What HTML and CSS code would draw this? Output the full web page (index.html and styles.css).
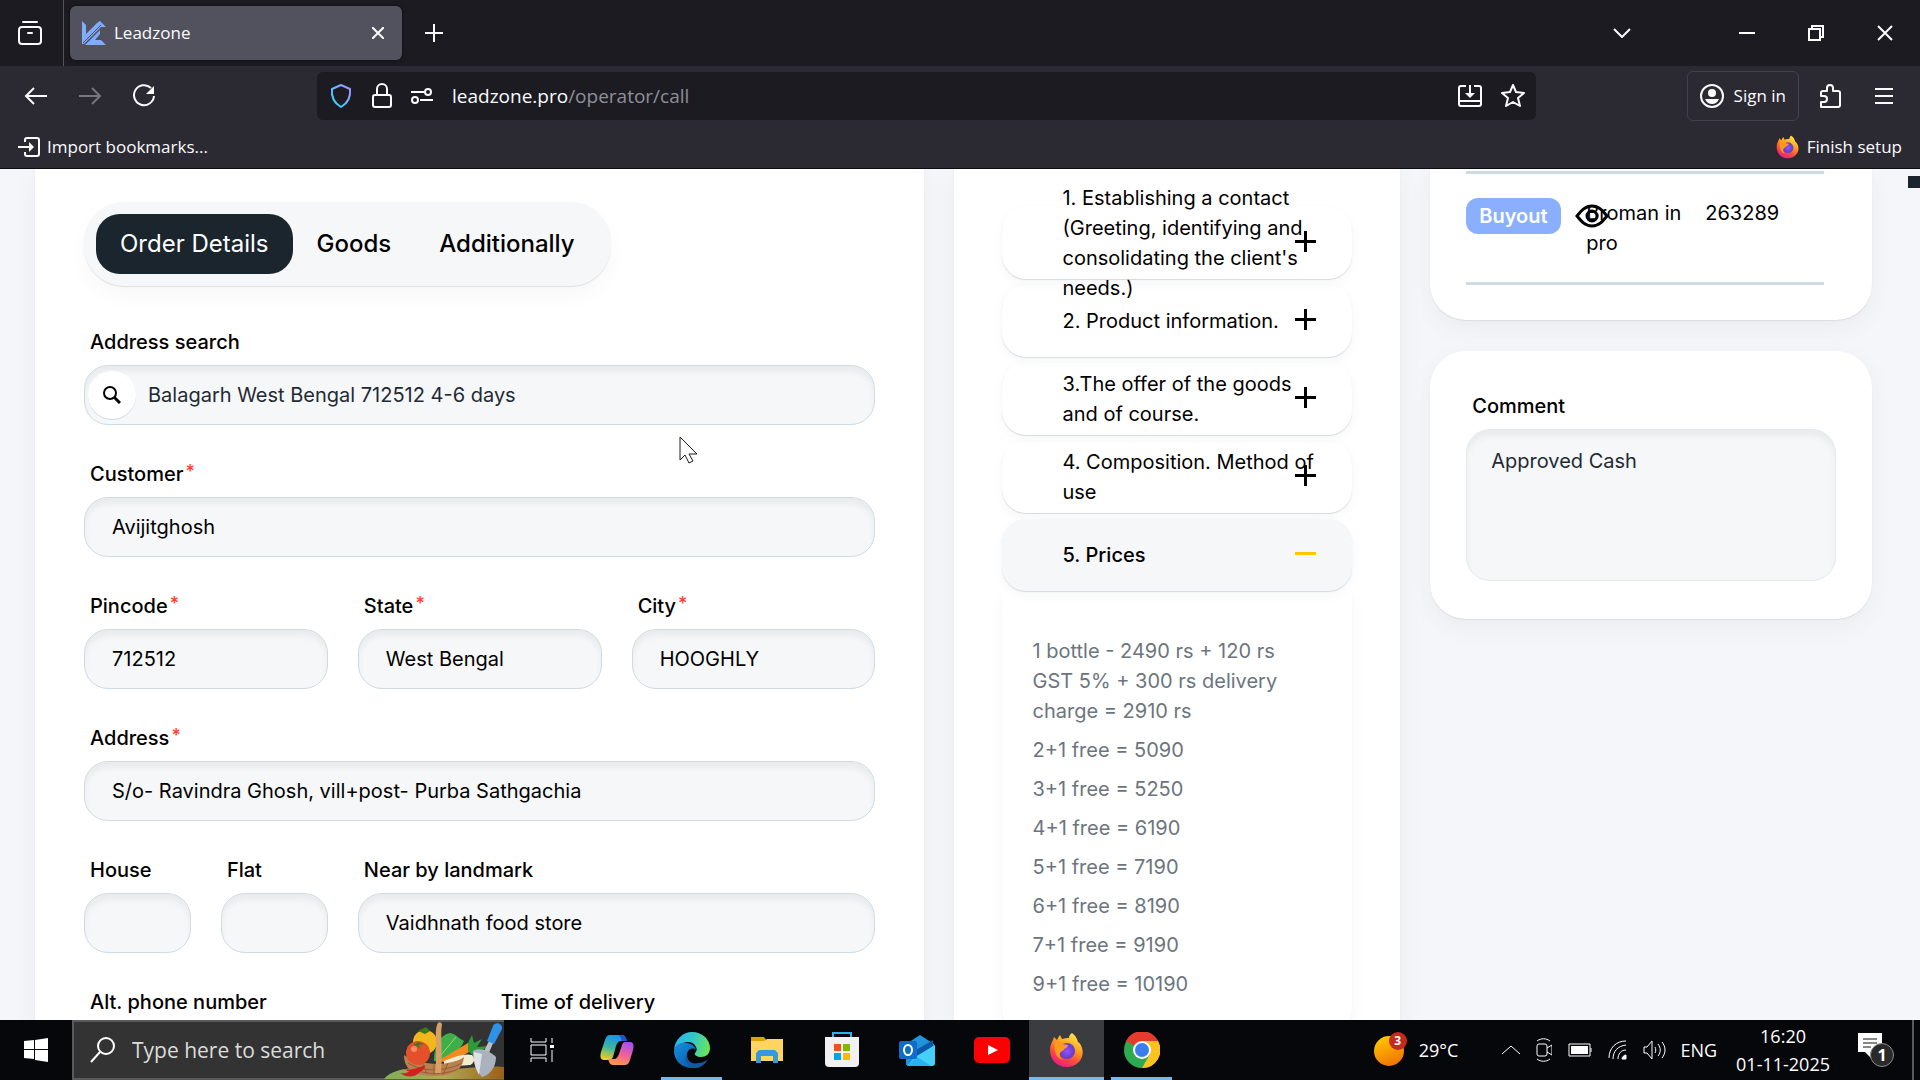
FILE: index.html
```
<!DOCTYPE html>
<html lang="en">
<head>
    <meta charset="UTF-8">
    <meta name="viewport" content="width=device-width, initial-scale=1.0">
    <title>Leadzone</title>
    <link rel="stylesheet" href="styles.css">
</head>
<body>
    <!-- gradients shared by the icons -->
    <svg width="0" height="0" class="defs" aria-hidden="true">
        <defs>
            <linearGradient id="shieldGrad" x1="0" y1="1" x2="1" y2="0"><stop offset="0" stop-color="#2ad4ff"/><stop offset=".5" stop-color="#6ab6ff"/><stop offset="1" stop-color="#a78bff"/></linearGradient>
            <linearGradient id="foxGrad" x1=".8" y1="0" x2=".3" y2="1"><stop offset="0" stop-color="#fff14f"/><stop offset=".4" stop-color="#ffa01e"/><stop offset=".7" stop-color="#ff4a3c"/><stop offset="1" stop-color="#e9178c"/></linearGradient>
            <radialGradient id="foxCore"><stop offset="0" stop-color="#9a4dff"/><stop offset="1" stop-color="#5b3fc4"/></radialGradient>
            <linearGradient id="edgeTop" x1="0" y1=".4" x2="1" y2=".6"><stop offset="0" stop-color="#2bb4ea"/><stop offset=".5" stop-color="#35c8c8"/><stop offset="1" stop-color="#6be84f"/></linearGradient>
            <linearGradient id="edgeLow" x1="0" y1="0" x2="1" y2="1"><stop offset="0" stop-color="#1590e0"/><stop offset="1" stop-color="#0a4f9e"/></linearGradient>
            <linearGradient id="copA" x1=".5" y1="0" x2=".2" y2="1"><stop offset="0" stop-color="#1793f0"/><stop offset=".5" stop-color="#3bb6a0"/><stop offset="1" stop-color="#f7d21a"/></linearGradient>
            <linearGradient id="copB" x1=".7" y1="0" x2=".3" y2="1"><stop offset="0" stop-color="#a850f0"/><stop offset=".5" stop-color="#f0609a"/><stop offset="1" stop-color="#ff9a4a"/></linearGradient>
            <linearGradient id="sunGrad" x1=".3" y1="0" x2=".7" y2="1"><stop offset="0" stop-color="#ffc800"/><stop offset="1" stop-color="#f07000"/></linearGradient>
            <linearGradient id="landGrad" x1="0" y1="0" x2="1" y2="0"><stop offset="0" stop-color="#7fae56"/><stop offset=".5" stop-color="#b0a850"/><stop offset="1" stop-color="#9a6018"/></linearGradient>
            <symbol id="firefox" viewBox="0 0 36 36">
                <path fill="url(#foxGrad)" d="M23 1c4 3 5 6 6 9 2 1 3 3 4 6 3 9-4 19-15 19S1 27 1 18c0-5 2-8 3-10l1-3 3 3c1-2 2-4 3-5l2 4c3-1 5-1 7-1 0-2 1-4 3-5z"/>
                <circle cx="18" cy="19" r="8" fill="url(#foxCore)"/>
                <path fill="#ff9a1e" d="M6 10c3-1 5 0 7 2l6 1c0 2-2 3-4 4 0 2-3 2-4 4-1 3 0 5 3 7-6-1-10-8-8-18z"/>
            </symbol>
        </defs>
    </svg>

    <header class="browser">
        <div class="titlebar">
            <button class="side-btn" aria-label="Recent browsing">
                <svg width="24" height="26" viewBox="0 0 24 26" fill="none" stroke="#fbfbfe" stroke-width="2" stroke-linecap="round"><path d="M5 2h14"/><rect x="1" y="7" width="22" height="17" rx="3"/><path d="M10 13h4"/></svg>
            </button>
            <div class="tab">
                <svg width="24" height="24" viewBox="0 0 24 24" fill="#7facff"><path d="M0 0l4 4v9L15 2l3-2 6 6h-5L2 23H0z"/><path d="M3 24L18 9v4l-5 6h6l5 5z"/><path d="M1 22L19 4" stroke="#52525e" stroke-width="1"/></svg>
                <span class="tab-title">Leadzone</span>
                <button aria-label="Close tab"><svg width="12" height="12" viewBox="0 0 12 12" stroke="#fbfbfe" stroke-width="2"><path d="M0 0l12 12M12 0L0 12"/></svg></button>
            </div>
            <button class="new-tab" aria-label="New tab"><svg width="18" height="18" viewBox="0 0 18 18" stroke="#fbfbfe" stroke-width="2"><path d="M9 0v18M0 9h18"/></svg></button>
            <div class="window-btns">
                <button class="list-tabs" aria-label="List all tabs"><svg width="18" height="10" viewBox="0 0 18 10" fill="none" stroke="#fbfbfe" stroke-width="2"><path d="M1 1l8 8 8-8"/></svg></button>
                <button aria-label="Minimize"><svg width="16" height="16" viewBox="0 0 16 16" stroke="#fff" stroke-width="2"><path d="M0 8h16"/></svg></button>
                <button aria-label="Restore"><svg width="16" height="16" viewBox="0 0 16 16" fill="none" stroke="#fff" stroke-width="2"><path d="M1 4h11v11H1zM4 4V1h11v11h-3"/></svg></button>
                <button aria-label="Close"><svg width="16" height="16" viewBox="0 0 16 16" stroke="#fff" stroke-width="2"><path d="M1 1l14 14M15 1L1 15"/></svg></button>
            </div>
        </div>

        <div class="toolbar">
            <div class="nav-btns">
                <button aria-label="Back"><svg width="24" height="20" viewBox="0 0 24 20" fill="none" stroke="#fbfbfe" stroke-width="2"><path d="M23 10H2M10 2l-8 8 8 8"/></svg></button>
                <button aria-label="Forward"><svg width="24" height="20" viewBox="0 0 24 20" fill="none" stroke="#75757e" stroke-width="2"><path d="M1 10h21M14 2l8 8-8 8"/></svg></button>
                <button aria-label="Reload"><svg width="24" height="24" viewBox="0 0 24 24" fill="none" stroke="#fbfbfe" stroke-width="2"><path d="M19 4a10 10 0 1 0 3 8"/><path d="M22 2v8h-8z" fill="#fbfbfe" stroke="none"/></svg></button>
            </div>
            <div class="urlbar">
                <svg width="24" height="26" viewBox="0 0 24 26" fill="none" stroke="url(#shieldGrad)" stroke-width="2"><path d="M12 2l9 4c1 9-2 14-9 18C5 20 2 15 3 6z" stroke-linejoin="round"/></svg>
                <svg width="20" height="26" viewBox="0 0 20 26" fill="none" stroke="#fbfbfe" stroke-width="2"><rect x="1" y="12" width="18" height="12" rx="2"/><path d="M5 12V6a5 5 0 0 1 10 0v6"/></svg>
                <svg width="22" height="16" viewBox="0 0 22 16" fill="none" stroke="#fbfbfe" stroke-width="2"><path d="M0 4h13M9 12h13"/><circle cx="17" cy="4" r="3"/><circle cx="4" cy="12" r="3"/></svg>
                <div class="url"><span>leadzone.pro</span>/operator/call</div>
                <svg width="24" height="24" viewBox="0 0 24 24" fill="none" stroke="#fbfbfe" stroke-width="2"><path d="M8 2H3a2 2 0 0 0-2 2v16a2 2 0 0 0 2 2h18a2 2 0 0 0 2-2V4a2 2 0 0 0-2-2h-5M1 17h22M12 1v11"/><path d="M7 9h10l-5 5z" fill="#fbfbfe" stroke="none"/></svg>
                <svg width="24" height="24" viewBox="0 0 24 24" fill="none" stroke="#fbfbfe" stroke-width="2" stroke-linejoin="round"><path d="M12 1l3 7 8 1-6 5 2 8-7-4-7 4 2-8-6-5 8-1z"/></svg>
            </div>
            <div class="account">
                <button class="sign-in">
                    <svg width="24" height="24" viewBox="0 0 24 24"><circle cx="12" cy="12" r="11" fill="none" stroke="#fbfbfe" stroke-width="2"/><circle cx="12" cy="9" r="4" fill="#fbfbfe"/><path d="M5 15h14c-1 3-4 5-7 5s-6-2-7-5z" fill="#fbfbfe"/></svg>
                    Sign in
                </button>
                <button aria-label="Extensions"><svg width="22" height="24" viewBox="0 0 22 24" fill="none" stroke="#fbfbfe" stroke-width="2" stroke-linejoin="round"><path d="M8 7V4a3 3 0 0 1 6 0v3h5a2 2 0 0 1 2 2v12a2 2 0 0 1-2 2H2v-5h3a3 3 0 0 0 0-6H2V9a2 2 0 0 1 2-2z"/></svg></button>
                <button aria-label="Menu"><svg width="18" height="16" viewBox="0 0 18 16" stroke="#fbfbfe" stroke-width="2"><path d="M0 1h18M0 8h18M0 15h18"/></svg></button>
            </div>
        </div>

        <div class="bookmarks">
            <a href="#">
                <svg width="22" height="20" viewBox="0 0 22 20" fill="none" stroke="#fbfbfe" stroke-width="2"><path d="M7 5V3a2 2 0 0 1 2-2h10a2 2 0 0 1 2 2v14a2 2 0 0 1-2 2H9a2 2 0 0 1-2-2v-2M0 10h14"/><path d="M11 5l5 5-5 5z" fill="#fbfbfe" stroke="none"/></svg>
                Import bookmarks...
            </a>
            <a href="#">
                <svg width="24" height="24"><use href="#firefox"/></svg>
                Finish setup
            </a>
        </div>
    </header>

    <main class="page">
        <section class="card order">
            <nav class="tabs">
                <button class="active">Order Details</button>
                <button>Goods</button>
                <button>Additionally</button>
            </nav>
            <form class="order-form">
                <div class="field full">
                    <label for="search">Address search</label>
                    <div class="search-box">
                        <input type="text" id="search" value="Balagarh West Bengal 712512 4-6 days">
                        <button type="button" aria-label="Search"><svg width="18" height="18" viewBox="0 0 18 18" fill="none" stroke="#000" stroke-width="2"><circle cx="7" cy="7" r="6"/><path d="M11 11l6 6" stroke-width="3"/></svg></button>
                    </div>
                </div>
                <div class="field full">
                    <label for="customer">Customer<sup>*</sup></label>
                    <input type="text" id="customer" value="Avijitghosh">
                </div>
                <div class="field third">
                    <label for="pincode">Pincode<sup>*</sup></label>
                    <input type="text" id="pincode" value="712512">
                </div>
                <div class="field third">
                    <label for="state">State<sup>*</sup></label>
                    <input type="text" id="state" value="West Bengal">
                </div>
                <div class="field third">
                    <label for="city">City<sup>*</sup></label>
                    <input type="text" id="city" value="HOOGHLY">
                </div>
                <div class="field full">
                    <label for="address">Address<sup>*</sup></label>
                    <input type="text" id="address" value="S/o- Ravindra Ghosh, vill+post- Purba Sathgachia">
                </div>
                <div class="field">
                    <label for="house">House</label>
                    <input type="text" id="house">
                </div>
                <div class="field">
                    <label for="flat">Flat</label>
                    <input type="text" id="flat">
                </div>
                <div class="field two-thirds">
                    <label for="landmark">Near by landmark</label>
                    <input type="text" id="landmark" value="Vaidhnath food store">
                </div>
                <div class="field half">
                    <label for="phone">Alt. phone number</label>
                    <input type="text" id="phone">
                </div>
                <div class="field half">
                    <label for="delivery">Time of delivery</label>
                    <input type="text" id="delivery">
                </div>
            </form>
        </section>

        <section class="card script">
            <button class="step"><span>1. Establishing a contact (Greeting, identifying and consolidating the client's needs.)</span><i class="plus"></i></button>
            <button class="step"><span>2. Product information.</span><i class="plus"></i></button>
            <button class="step"><span>3.The offer of the goods and of course.</span><i class="plus"></i></button>
            <button class="step"><span>4. Composition. Method of use</span><i class="plus"></i></button>
            <button class="step open"><span>5. Prices</span><i class="plus"></i></button>
            <div class="prices">
                <p>1 bottle - 2490 rs + 120 rs GST 5% + 300 rs delivery charge = 2910 rs</p>
                <p>2+1 free = 5090</p>
                <p>3+1 free = 5250</p>
                <p>4+1 free = 6190</p>
                <p>5+1 free = 7190</p>
                <p>6+1 free = 8190</p>
                <p>7+1 free = 9190</p>
                <p>9+1 free = 10190</p>
            </div>
        </section>

        <aside class="side">
            <section class="card history">
                <table>
                    <tr>
                        <td class="status">
                            <span class="badge">Buyout</span>
                            <svg class="eye" width="34" height="24" viewBox="0 0 34 24" fill="none" stroke="#000" stroke-width="3"><path d="M2 12c4-5 8-10 15-10s11 5 15 10c-4 5-8 10-15 10S6 17 2 12z"/><circle cx="17" cy="12" r="5"/></svg>
                        </td>
                        <td class="product">Broman in pro</td>
                        <td>263289</td>
                    </tr>
                </table>
            </section>
            <section class="card comment">
                <label for="comment">Comment</label>
                <textarea id="comment">Approved Cash</textarea>
            </section>
        </aside>

        <i class="scroll-mark"></i>
        <svg class="cursor" width="19" height="28" viewBox="0 0 19 28"><path d="M1 1v23l5-5 4 8 4-2-4-7h8z" fill="#fff" stroke="#1a1a2a" stroke-width="1"/></svg>
    </main>

    <footer class="taskbar">
        <button class="start" aria-label="Start"><svg width="24" height="24" viewBox="0 0 24 24" fill="#fff"><path d="M0 3l10-1v9H0zM11 2l13-2v11H11zM0 12h10v9L0 20zM11 12h13v12l-13-2z"/></svg></button>
        <div class="task-search">
            <svg width="26" height="26" viewBox="0 0 26 26" fill="none" stroke="#fff" stroke-width="2"><circle cx="16" cy="9" r="8"/><path d="M10 15L1 25"/></svg>
            <input type="text" placeholder="Type here to search" aria-label="Type here to search">
            <svg width="120" height="58" viewBox="0 0 120 58">
                <path d="M0 58C8 48 26 46 48 48c26 2 44-4 72-2v12z" fill="url(#landGrad)"/>
                <ellipse cx="41" cy="21" rx="12" ry="12" fill="#f2b71c"/>
                <path d="M34 10l7 3 5-3-4-4" fill="#3c7a1c"/>
                <path d="M50 40c0-16 6-26 16-28 6 1 8 5 14 8-4 10-14 18-22 20z" fill="#3fae49"/>
                <path d="M52 40L72 16" stroke="#9ad67a" stroke-width="1"/>
                <path d="M54 40l30-18 6 6-24 14z" fill="#f58a1f"/>
                <path d="M84 22l4-8 2 8 8-4-5 8 11-1-8 6 6 6-12-2-6-5z" fill="#2f9a3a"/>
                <path d="M60 40c10-4 20-8 28-6 4 4 2 8-2 10l-26 2z" fill="#f0edd0"/>
                <path d="M20 34c0 16 12 21 30 21s29-6 30-19c-12 9-42 10-60-2z" fill="#b98050"/>
                <path d="M24 42c14 9 38 9 54 0M28 48c14 6 34 6 46 0M38 41l5 12M50 43v11M64 42l-5 12" fill="none" stroke="#94602f" stroke-width="1"/>
                <circle cx="34" cy="32" r="12" fill="#e4502c"/>
                <circle cx="30" cy="28" r="3" fill="#ff8a68"/>
                <path d="M29 24l5-3 6 2-5 1 1 4-3-3z" fill="#3c7a1c"/>
                <path d="M51 52C54 32 50 12 53 4c1-4 5-3 5 0-2 8 1 30-1 48z" fill="#d9a066"/>
                <path d="M16 52c8 2 12-6 22-4-4 8-14 10-22 4zM20 48c8 2 16-2 21-4 0 8-12 10-21 4z" fill="#d3201c"/>
                <path d="M99 32l7-14 4 2-6 14z" fill="#b9c0c8"/>
                <path d="M89 30c6-4 16-1 23 6 0 10-6 18-14 20-6-6-9-16-9-26z" fill="#a9b2bd"/>
                <path d="M98 33l-3 21c-4-7-6-15-5-23z" fill="#dde2e8"/>
                <path d="M103 20l6-15c2-5 10-3 9 3l-8 15z" fill="#2f92e6"/>
            </svg>
        </div>
        <nav class="apps">
            <button aria-label="Task view"><svg width="24" height="24" viewBox="0 0 24 24" fill="none" stroke="#fff" stroke-width="1"><path d="M1 0v4h15V0M1 24v-4h15v4M1 7h15v10H1zM22 0v5M22 12v12"/><path d="M20 7h4v3h-4z" fill="#fff" stroke="none"/></svg></button>
            <button aria-label="Copilot"><svg width="34" height="32" viewBox="0 0 34 32"><path d="M10 1h12c3 0 4 3 5 6h-6c-3 0-4 2-5 5l-3 11c-1 2-2 3-4 3H4c-4 0-4-4-3-8L5 6c1-3 2-5 5-5z" fill="url(#copA)"/><path d="M18 1h4c3 0 4 3 5 6h-5c-1-3-2-6-4-6z" fill="#1f55c8"/><path d="M24 31H13c-3 0-4-3-5-6h6c2 0 4-2 5-5l3-9c1-3 2-3 4-3h4c4 0 4 4 3 8l-3 10c-1 3-2 5-6 5z" fill="url(#copB)"/></svg></button>
            <button class="running" aria-label="Edge"><svg width="36" height="36" viewBox="0 0 36 36"><path d="M0 18C1 7 9 0 18 0c11 0 18 8 18 16 0 6-4 9-9 9-4 0-7-2-6-4 2-2 2-4 1-6-2-5-8-6-13-4-4 1-7 3-9 7z" fill="url(#edgeTop)"/><path d="M0 19c1-6 6-9 12-8 5 0 9 3 10 7-3-3-9-1-9 5 0 7 6 12 14 11-3 2-6 2-9 2C7 36 0 28 0 19z" fill="url(#edgeLow)"/><path d="M13 20c-2 7 4 13 11 11 4 0 8-2 10-4-3 6-8 9-13 9-8-1-12-9-8-16z" fill="#1456a4"/></svg></button>
            <button aria-label="File Explorer"><svg width="32" height="28" viewBox="0 0 32 28"><path d="M0 1h13l3 4h-4L0 8z" fill="#e0a100"/><path d="M0 5h13l3-2h16v22H0z" fill="#ffd560"/><path d="M5 27V17l3-3h16l3 3v10h-5v-7H10v7z" fill="#3a96dd"/></svg></button>
            <button aria-label="Store"><svg width="36" height="36" viewBox="0 0 36 36"><path d="M9 6V1h18v5" fill="none" stroke="#2db1ee" stroke-width="2"/><path d="M1 5h34v26a4 4 0 0 1-4 4H5a4 4 0 0 1-4-4z" fill="#f1f1f1"/><path d="M10 12h7v7h-7z" fill="#f25022"/><path d="M19 12h7v7h-7z" fill="#7fba00"/><path d="M10 21h7v7h-7z" fill="#00a4ef"/><path d="M19 21h7v7h-7z" fill="#ffb900"/></svg></button>
            <button aria-label="Outlook"><svg width="36" height="31" viewBox="0 0 36 31"><path d="M7 9L21 0l14 9v21H7z" fill="#1f93dd"/><path d="M12 18L34 5v6L18 22z" fill="#0c57a8"/><path d="M16 22l20-12v18a3 3 0 0 1-3 3H8z" fill="#45d0f8"/><path d="M8 31l10-9 14 9z" fill="#2ab2ee"/><rect y="6" width="18" height="18" rx="2" fill="#0f6cc8"/><ellipse cx="9" cy="15" rx="4" ry="5" fill="none" stroke="#fff" stroke-width="2"/></svg></button>
            <button aria-label="YouTube"><svg width="36" height="26" viewBox="0 0 36 26"><rect width="36" height="26" rx="5" fill="#f00"/><path d="M14 8l10 5-10 5z" fill="#fff"/></svg></button>
            <button class="running current" aria-label="Firefox"><svg width="36" height="36"><use href="#firefox"/></svg></button>
            <button class="running" aria-label="Chrome"><svg width="36" height="36" viewBox="0 0 36 36"><circle cx="18" cy="18" r="18" fill="#2da94f"/><path d="M18 18L2 9a18 18 0 0 1 32 0z" fill="#e33b2e"/><path d="M18 9h16a18 18 0 0 1-16 27l8-14z" fill="#fcc31e"/><circle cx="18" cy="18" r="9" fill="#fff"/><circle cx="18" cy="18" r="7" fill="#3b7ded"/></svg></button>
        </nav>
        <div class="tray">
            <div class="weather">
                <svg width="34" height="34" viewBox="0 0 34 34"><circle cx="15" cy="18" r="15" fill="url(#sunGrad)"/></svg>
                <b>3</b>
                <span>29°C</span>
            </div>
            <div class="tray-icons">
                <svg width="18" height="10" viewBox="0 0 18 10" fill="none" stroke="#fff" stroke-width="1"><path d="M0 9l9-8 9 8"/></svg>
                <svg width="16" height="24" viewBox="0 0 16 24" fill="none" stroke="#fff" stroke-width="1"><path d="M1 3c4-3 9-3 13 0M1 21c4 3 9 3 13 0M11 10l5-3v10l-5-3"/><rect x="1" y="6" width="10" height="12" rx="2"/></svg>
                <svg width="24" height="14" viewBox="0 0 24 14" fill="none" stroke="#fff" stroke-width="1"><path d="M1 1h21v12H1zM23 5v4"/><path d="M3 3h17v8H3z" fill="#fff" stroke="none"/></svg>
                <svg width="19" height="20" viewBox="0 0 19 20" fill="none" stroke="#fff" stroke-width="1"><path d="M1 18C1 8 8 1 18 1M5 19C5 11 10 6 18 5M10 19c0-5 3-9 8-9"/><path d="M14 19c0-2 2-4 4-4v4z" fill="#fff"/></svg>
                <svg width="23" height="20" viewBox="0 0 23 20" fill="none" stroke="#fff" stroke-width="1"><path d="M1 7h3l5-6v18l-5-6H1zM12 7c1 2 1 4 0 6M15 4c3 4 3 8 0 12M19 2c4 5 4 11 0 16"/></svg>
            </div>
            <span>ENG</span>
            <div class="clock">16:20<br>01-11-2025</div>
            <div class="notice">
                <svg width="24" height="26" viewBox="0 0 24 26"><path d="M0 1h24v19H13v6l-6-6H0z" fill="#fff"/><path d="M5 7h14M5 11h14M5 15h8" stroke="#111" stroke-width="1"/></svg>
                <b>1</b>
            </div>
            <i class="show-desktop"></i>
        </div>
    </footer>
</body>
</html>
```
FILE: styles.css
```
* {
    box-sizing: border-box;
}
body {
    margin: 0;
    height: 100vh;
    display: flex;
    flex-direction: column;
    overflow: hidden;
    font-family: Inter, "Open Sans", sans-serif;
    font-size: 20px;
    line-height: 30px;
    color: #000;
}
button, input, textarea {
    font: inherit;
    color: inherit;
}
button {
    padding: 0;
    border: none;
    background: none;
    cursor: pointer;
}
svg {
    display: block;
    flex: none;
}
.defs {
    position: absolute;
}

/* browser window */
.browser {
    flex: none;
    font-family: "Open Sans", sans-serif;
    font-size: 17px;
    line-height: 24px;
    color: #fbfbfe;
    background: #2b2a33;
    border-bottom: 1px solid #0c0c0d;
}
.titlebar {
    display: flex;
    align-items: center;
    height: 66px;
    background: #1c1b22;
}
.side-btn {
    align-self: stretch;
    width: 64px;
    padding: 0 22px 0 18px;
    border-right: 1px solid #52525e;
}
.tab {
    display: flex;
    align-items: center;
    gap: 8px;
    width: 332px;
    height: 54px;
    margin-left: 6px;
    padding: 0 18px 0 12px;
    background: #52525e;
    border-radius: 6px;
    box-shadow: 0 0 4px rgba(0, 0, 0, 0.5);
}
.tab-title {
    flex: 1;
}
.new-tab {
    margin-left: 23px;
}
.window-btns {
    display: flex;
    align-items: center;
    gap: 53px;
    margin-left: auto;
    padding-right: 27px;
}
.list-tabs {
    margin-right: 55px;
}
.toolbar {
    display: flex;
    align-items: center;
    height: 60px;
}
.nav-btns {
    display: flex;
    align-items: center;
    gap: 30px;
    width: 317px;
    padding-left: 24px;
}
.urlbar {
    flex: 1;
    display: flex;
    align-items: center;
    gap: 19px;
    height: 48px;
    padding: 0 11px 0 12px;
    background: #1c1b22;
    border-radius: 6px;
}
.url {
    flex: 1;
    font-size: 19px;
    color: #8f8f99;
}
.url span {
    color: #fbfbfe;
}
.account {
    display: flex;
    align-items: center;
    justify-content: flex-end;
    width: 384px;
    gap: 20px;
    padding-right: 27px;
}
.account button:last-child {
    margin-left: 14px;
}
.sign-in {
    display: flex;
    align-items: center;
    gap: 10px;
    height: 50px;
    padding: 0 12px;
    border: 1px solid #42414d;
    border-radius: 6px;
}
.bookmarks {
    display: flex;
    align-items: center;
    justify-content: space-between;
    height: 42px;
    padding: 0 18px;
}
.bookmarks a {
    display: flex;
    align-items: center;
    gap: 7px;
    color: #fbfbfe;
    text-decoration: none;
}

/* operator page */
.page {
    flex: 1;
    min-height: 0;
    position: relative;
    overflow: hidden;
    display: grid;
    grid-template-columns: 890fr 446fr 442fr;
    gap: 30px;
    padding: 0 48px 0 35px;
    background: #f5f6f9;
}
.card {
    background: #fff;
    box-shadow: 0 1px 1px rgba(0, 0, 0, 0.08), 0 8px 24px rgba(30, 50, 60, 0.05);
}
.order {
    padding: 33px 49px;
}
.tabs {
    display: inline-flex;
    padding: 12px;
    margin-bottom: 44px;
    background: #f6f7f9;
    border-radius: 40px;
    box-shadow: 0 1px 1px rgba(0, 0, 0, 0.1), 0 10px 20px rgba(0, 0, 0, 0.03);
}
.tabs button {
    height: 60px;
    padding: 0 24px;
    border-radius: 24px;
    font-size: 24px;
    font-weight: 500;
}
.tabs .active {
    background: #1b252d;
    color: #fff;
    font-weight: 400;
}
.order-form {
    display: grid;
    grid-template-columns: repeat(6, 1fr);
    gap: 37px 30px;
}
.full {
    grid-column: span 6;
}
.half {
    grid-column: span 3;
}
.third {
    grid-column: span 2;
}
.two-thirds {
    grid-column: span 4;
}
label {
    display: block;
    margin-bottom: 11px;
    padding-left: 6px;
    font-weight: 500;
    line-height: 24px;
}
sup {
    margin-left: 2px;
    font-size: 18px;
    line-height: 0;
    vertical-align: 3px;
    color: #ff3b30;
}
.order input, textarea {
    display: block;
    width: 100%;
    height: 60px;
    padding: 0 27px;
    background: #f6f7f9;
    border: 1px solid #cedbe5;
    border-radius: 24px;
    box-shadow: inset 0 6px 6px rgba(0, 0, 0, 0.05);
}
.search-box {
    position: relative;
}
.order .search-box input {
    padding-left: 63px;
    color: #1f2a33;
}
.search-box button {
    position: absolute;
    top: 6px;
    left: 4px;
    width: 48px;
    height: 48px;
    display: flex;
    align-items: center;
    justify-content: center;
    background: #fff;
    border-radius: 24px;
    box-shadow: 0 1px 0 #cedbe5;
}

.script {
    padding: 38px 48px;
}
.step {
    position: relative;
    display: flex;
    align-items: center;
    width: 100%;
    height: 72px;
    margin-bottom: 6px;
    padding: 0 30px 0 60px;
    border-radius: 24px;
    box-shadow: 0 1px 1px rgba(60, 70, 100, 0.18), 0 4px 12px rgba(30, 50, 60, 0.04);
    text-align: left;
}
.open {
    margin-bottom: 0;
    background: #f6f7f9;
    font-weight: 500;
}
.plus {
    position: absolute;
    top: 33px;
    right: 36px;
    width: 21px;
    height: 3px;
    background: #000;
}
.plus::after {
    content: "";
    position: absolute;
    top: -9px;
    left: 9px;
    width: 3px;
    height: 21px;
    background: #000;
}
.open .plus {
    background: #ffc700;
}
.open .plus::after {
    display: none;
}
.prices {
    padding: 45px 40px 35px 30px;
    border-radius: 0 0 24px 24px;
    box-shadow: 0 1px 1px rgba(0, 0, 0, 0.08), 0 8px 20px rgba(0, 0, 0, 0.03);
    color: #6c757d;
}
.prices p {
    margin: 0 0 9px;
}
.prices p:last-child {
    margin-bottom: 0;
}

.history {
    padding: 2px 48px 35px 36px;
    border-radius: 0 0 36px 36px;
}
.history table {
    width: 100%;
    height: 114px;
    border-collapse: separate;
    border-spacing: 0;
    border-top: 3px solid #cedbe5;
    border-bottom: 3px solid #cedbe5;
}
.history td {
    padding: 24px 0 0;
    vertical-align: top;
}
.status {
    position: relative;
    width: 120px;
}
.history .product {
    width: 119px;
    padding-right: 16px;
}
.badge {
    display: inline-block;
    height: 36px;
    padding: 0 13px;
    background: #8aafff;
    border-radius: 12px;
    color: #fff;
    font-weight: 600;
    line-height: 36px;
}
.eye {
    position: absolute;
    top: 30px;
    left: 109px;
}
.comment {
    margin-top: 31px;
    padding: 43px 36px 38px;
    border-radius: 36px;
}
textarea {
    height: 152px;
    padding: 16px 24px;
    border-color: #e4eaf0;
    color: #1f2a33;
    resize: none;
}
.scroll-mark {
    position: absolute;
    top: 7px;
    right: 0;
    width: 12px;
    height: 12px;
    background: #1b252d;
}
.cursor {
    position: absolute;
    top: 267px;
    left: 679px;
}

/* windows taskbar */
.taskbar {
    flex: none;
    display: flex;
    height: 60px;
    background: #05070b;
    color: #fff;
    font-family: "Open Sans", sans-serif;
    font-size: 18px;
}
.start {
    width: 72px;
    padding-left: 24px;
}
.task-search {
    display: flex;
    align-items: center;
    width: 432px;
    padding-left: 16px;
    background: #333;
    border: 2px solid #5a5a5a;
    border-right: none;
}
.task-search input {
    flex: 1;
    min-width: 0;
    margin-left: 16px;
    padding: 0;
    border: none;
    background: none;
    font-size: 21px;
}
.task-search input::placeholder {
    color: #dcdcdc;
}
.apps {
    display: flex;
}
.apps button {
    display: flex;
    align-items: center;
    justify-content: center;
    position: relative;
    width: 75px;
}
.running::after {
    content: "";
    position: absolute;
    bottom: 0;
    left: 7px;
    right: 7px;
    height: 3px;
    background: #76b9ed;
}
.current {
    background: #3b3c40;
}
.current::after {
    left: 0;
    right: 0;
}
.tray {
    display: flex;
    align-items: center;
    gap: 14px;
    margin-left: auto;
    padding-right: 6px;
}
.weather {
    position: relative;
    display: flex;
    align-items: center;
    gap: 11px;
    margin-right: 30px;
}
.weather b {
    position: absolute;
    top: -1px;
    left: 15px;
    width: 18px;
    height: 18px;
    border-radius: 9px;
    background: #c42b1c;
    font-size: 12px;
    line-height: 18px;
    text-align: center;
}
.tray-icons {
    display: flex;
    align-items: center;
    gap: 16px;
}
.clock {
    padding-left: 5px;
    line-height: 28px;
    text-align: center;
}
.notice {
    position: relative;
    width: 36px;
    height: 36px;
    margin-left: 14px;
}
.notice b {
    position: absolute;
    top: 11px;
    left: 12px;
    width: 24px;
    height: 24px;
    border: 1px solid #8a8a8a;
    border-radius: 12px;
    background: #2a2a2a;
    font-size: 16px;
    line-height: 22px;
    text-align: center;
}
.show-desktop {
    align-self: stretch;
    margin-left: 4px;
    border-left: 2px solid #5a5a5a;
}
```
